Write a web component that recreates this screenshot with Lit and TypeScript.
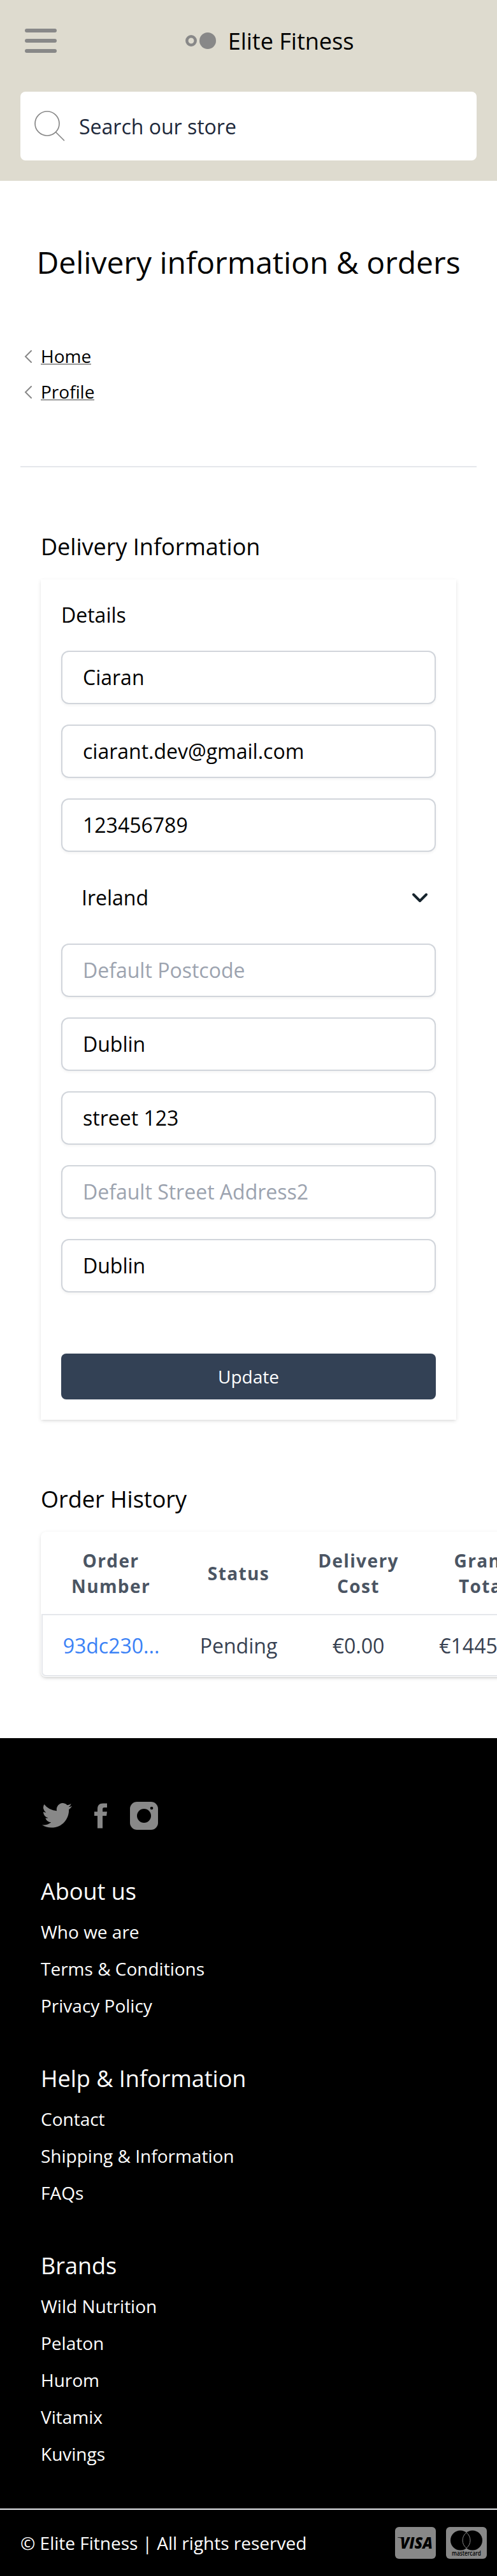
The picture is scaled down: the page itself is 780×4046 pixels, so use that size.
import { LitElement, html, css, svg } from "lit";
import { customElement } from "lit/decorators.js";

interface Field { value?: string; placeholder?: string; }

const contactFields: Field[] = [
  { value: "Ciaran" },
  { value: "ciarant.dev@gmail.com" },
  { value: "123456789" },
];
const addressFields: Field[] = [
  { placeholder: "Default Postcode" },
  { value: "Dublin" },
  { value: "street 123" },
  { placeholder: "Default Street Address2" },
  { value: "Dublin" },
];
const footerGroups = [
  { title: "About us", links: ["Who we are", "Terms & Conditions", "Privacy Policy"] },
  { title: "Help & Information", links: ["Contact", "Shipping & Information", "FAQs"] },
  { title: "Brands", links: ["Wild Nutrition", "Pelaton", "Hurom", "Vitamix", "Kuvings"] },
];

@customElement("site-header")
export class SiteHeader extends LitElement {
  static styles = css`
    :host { display: block; background: #dedbcf; padding: 0 32px 32px; }
    .bar { display: grid; grid-template-columns: 64px 1fr; height: 128px; align-items: center; }
    .menu { margin-left: 7px; display: block; }
    .brand { display: flex; justify-content: center; align-items: center; gap: 19px;
      padding-left: 2px; font-size: 36px; line-height: 56px; color: #000; }
    .name { padding-top: 2px; }
    .search { margin-top: 16px; height: 108px; border-radius: 8px; background: #fff;
      display: flex; align-items: center; gap: 21px; padding-left: 21px; font-size: 32px; color: #1e293b; }
    svg { display: block; }
  `;
  render() {
    return html`
      <div class="bar">
        <svg class="menu" width="50" height="38" viewBox="0 0 50 38" fill="#888">
          <rect width="50" height="6" rx="3" /><rect y="16" width="50" height="6" rx="3" /><rect y="32" width="50" height="6" rx="3" />
        </svg>
        <div class="brand">
          <svg width="48" height="26" viewBox="0 0 48 26">
            <circle cx="9" cy="13" r="6.7" fill="none" stroke="#888" stroke-width="4.5" />
            <circle cx="35" cy="13" r="13" fill="#888" />
          </svg>
          <span class="name">Elite Fitness</span>
        </div>
      </div>
      <div class="search">
        <svg width="50" height="54" viewBox="0 0 50 54" fill="none" stroke="#888" stroke-width="1.7" stroke-linecap="round">
          <circle cx="21" cy="23" r="19" /><path d="M34.5 36.5 L47.5 49.5" />
        </svg>
        <span>Search our store</span>
      </div>`;
  }
}

@customElement("details-card")
export class DetailsCard extends LitElement {
  static styles = css`
    :host { display: block; background: #fff; padding: 32px; box-shadow: 0 2px 6px rgba(0,0,0,.1), 0 2px 4px -2px rgba(0,0,0,.1); }
    .title { font-size: 32px; line-height: 48px; margin-bottom: 32px; }
    .fields { display: flex; flex-direction: column; gap: 32px; }
    .field { box-sizing: border-box; height: 84px; border: 2px solid #d1d5db; border-radius: 12px;
      padding: 0 32px; font-size: 32px; line-height: 80px; box-shadow: 0 2px 4px rgba(0,0,0,.05); }
    .empty { color: #9ca3af; }
    .select { height: 80px; padding: 0 12px 0 32px; font-size: 32px; line-height: 80px;
      display: flex; align-items: center; justify-content: space-between; }
    .button { margin-top: 96px; height: 72px; line-height: 72px; background: #334155; color: #fff;
      border-radius: 8px; font-size: 28px; text-align: center; }
  `;
  private field(f: Field) {
    return html`<div class="field ${f.value ? "" : "empty"}">${f.value ?? f.placeholder}</div>`;
  }
  render() {
    return html`
      <div class="title">Details</div>
      <div class="fields">
        ${contactFields.map((f) => this.field(f))}
        <div class="select">
          <span>Ireland</span>
          <svg width="26" height="16" viewBox="0 0 26 16" fill="none" stroke="#16242d" stroke-width="4" stroke-linecap="round" stroke-linejoin="round"><path d="M3 3 L13 13 L23 3" /></svg>
        </div>
        ${addressFields.map((f) => this.field(f))}
      </div>
      <div class="button">Update</div>`;
  }
}

@customElement("orders-table")
export class OrdersTable extends LitElement {
  static styles = css`
    :host { display: block; width: 796px; background: #fff; border-radius: 8px; overflow: hidden;
      box-shadow: 0 2px 6px rgba(0,0,0,.1), 0 2px 4px -2px rgba(0,0,0,.2); padding-bottom: 1px; }
    .row { display: grid; grid-template-columns: 218px 185px 191px 202px; align-items: center; text-align: center; }
    .head { height: 129px; font-size: 28px; line-height: 40px; font-weight: 700; letter-spacing: 1.4px; color: #4b5563; }
    .head span:first-child { padding-left: 2px; }
    .body { box-sizing: border-box; height: 98px; border: 2px solid #e5e7eb; margin: 0 1px;
      grid-template-columns: 215px 185px 191px 199px; font-size: 32px; color: #374151; border-radius: 0 0 7px 7px; }
    .link { color: #3b82f6; }
  `;
  render() {
    return html`
      <div class="row head">
        <span>Order<br />Number</span><span>Status</span><span>Delivery<br />Cost</span><span>Grand<br />Total</span>
      </div>
      <div class="row body">
        <span class="link">93dc230...</span><span>Pending</span><span>€0.00</span><span>€1445.99</span>
      </div>`;
  }
}

const twitter = svg`<path transform="scale(1.96)" d="M24 2.4a9.8 9.8 0 0 1-2.8.8 4.9 4.9 0 0 0 2.1-2.7 9.8 9.8 0 0 1-3.1 1.2A4.9 4.9 0 0 0 11.8 6.2 14 14 0 0 1 1.7 1 4.9 4.9 0 0 0 3.2 7.6 4.9 4.9 0 0 1 1 7v.1a4.9 4.9 0 0 0 3.9 4.8 4.9 4.9 0 0 1-2.2.1 4.9 4.9 0 0 0 4.6 3.4A9.9 9.9 0 0 1 0 17.5 14 14 0 0 0 7.5 19.7C16.6 19.7 21.5 12.2 21.5 5.7v-.6A10 10 0 0 0 24 2.4z"/>`;

@customElement("site-footer")
export class SiteFooter extends LitElement {
  static styles = css`
    :host { display: block; background: #000; color: #fff; }
    .social { display: flex; align-items: center; padding: 100px 66px 68px; height: 44px; }
    .facebook { margin-left: 34px; }
    .instagram { margin-left: 36px; }
    .groups { display: flex; flex-direction: column; gap: 57px; padding: 0 64px 57px; }
    .title { font-size: 36px; line-height: 58px; margin-bottom: 5px; }
    .link { font-size: 28px; line-height: 58px; }
    .legal { border-top: 2px solid #e5e7eb; height: 104px; padding: 0 16px 0 32px; display: flex;
      align-items: center; justify-content: space-between; font-size: 28px; }
    .cards { display: flex; gap: 16px; }
    .visa { font: italic 800 25px "Open Sans", sans-serif; }
    .mastercard { font: 600 10px "Open Sans", sans-serif; }
    svg { display: block; }
  `;
  render() {
    return html`
      <div class="social">
        <svg width="48" height="40" viewBox="0 0 48 40" fill="#888">${twitter}</svg>
        <svg class="facebook" width="20" height="40" viewBox="0 0 20 40" fill="#888">
          <path d="M5 39.5V20H0v-6.500h5V9.500C5 3.500 8 .5 13.500.5H20V7h-4.200c-2.300 0-2.800 1-2.800 3v3.500h7L19.200 20H13v19.500z" />
        </svg>
        <svg class="instagram" width="44" height="44" viewBox="0 0 44 44">
          <rect width="44" height="44" rx="11" fill="#888" /><circle cx="22" cy="22" r="11" /><circle cx="34" cy="10" r="2.3" />
        </svg>
      </div>
      <div class="groups">
        ${footerGroups.map((g) => html`<div>
          <div class="title">${g.title}</div>
          ${g.links.map((l) => html`<div class="link">${l}</div>`)}
        </div>`)}
      </div>
      <div class="legal">
        <span>© Elite Fitness | All rights reserved</span>
        <div class="cards">
          <svg width="64" height="50" viewBox="0 0 64 50">
            <rect width="64" height="50" rx="6" fill="#888" />
            <path d="M4 16.300H10.500L11 18.300Q8 16.900 4 16.700Z" />
            <text class="visa" x="8" y="33.5" textLength="51" lengthAdjust="spacingAndGlyphs">VISA</text>
          </svg>
          <svg width="64" height="50" viewBox="0 0 64 50">
            <rect width="64" height="50" rx="6" fill="#888" />
            <circle cx="22.5" cy="21" r="15.5" /><circle cx="41.5" cy="21" r="15.5" />
            <path d="M32 8.750a15.500 15.500 0 0 1 0 24.500a15.500 15.500 0 0 1 0-24.500z" fill="none" stroke="#888" />
            <text class="mastercard" x="9" y="44.5" textLength="46" lengthAdjust="spacingAndGlyphs">mastercard</text>
          </svg>
        </div>
      </div>`;
  }
}

@customElement("app-root")
export class AppRoot extends LitElement {
  static styles = css`
    :host { display: block; width: 780px; height: 4046px; overflow: hidden; background: #fff; color: #000;
      font-family: "Open Sans", "Noto Sans", sans-serif; }
    .page-title { padding-top: 96px; text-align: center; font-size: 48px; line-height: 64px; }
    .crumbs { margin: 87px 32px 0; padding-bottom: 89px; border-bottom: 2px solid #e5e7eb; }
    .crumb { display: flex; align-items: center; gap: 14px; height: 56px; padding-left: 6px; font-size: 28px; }
    .crumb-icon { margin-top: 2px; }
    .crumb-link { margin-top: 2px; line-height: 24px; border-bottom: 2px solid #999; }
    .section { margin: 96px 64px 0; }
    .heading { font-size: 36px; line-height: 58px; margin-bottom: 22px; }
    .footer { margin-top: 96px; }
  `;
  render() {
    return html`
      <site-header></site-header>
      <div class="page-title">Delivery information &amp; orders</div>
      <div class="crumbs">
        ${["Home", "Profile"].map((c) => html`<div class="crumb">
          <svg class="crumb-icon" width="12" height="20" viewBox="0 0 12 20" fill="none" stroke="#888" stroke-width="2" stroke-linecap="round"><path d="M11 1 L2 10 L11 19" /></svg>
          <span class="crumb-link">${c}</span>
        </div>`)}
      </div>
      <div class="section"><div class="heading">Delivery Information</div><details-card></details-card></div>
      <div class="section"><div class="heading">Order History</div><orders-table></orders-table></div>
      <site-footer class="footer"></site-footer>`;
  }
}
